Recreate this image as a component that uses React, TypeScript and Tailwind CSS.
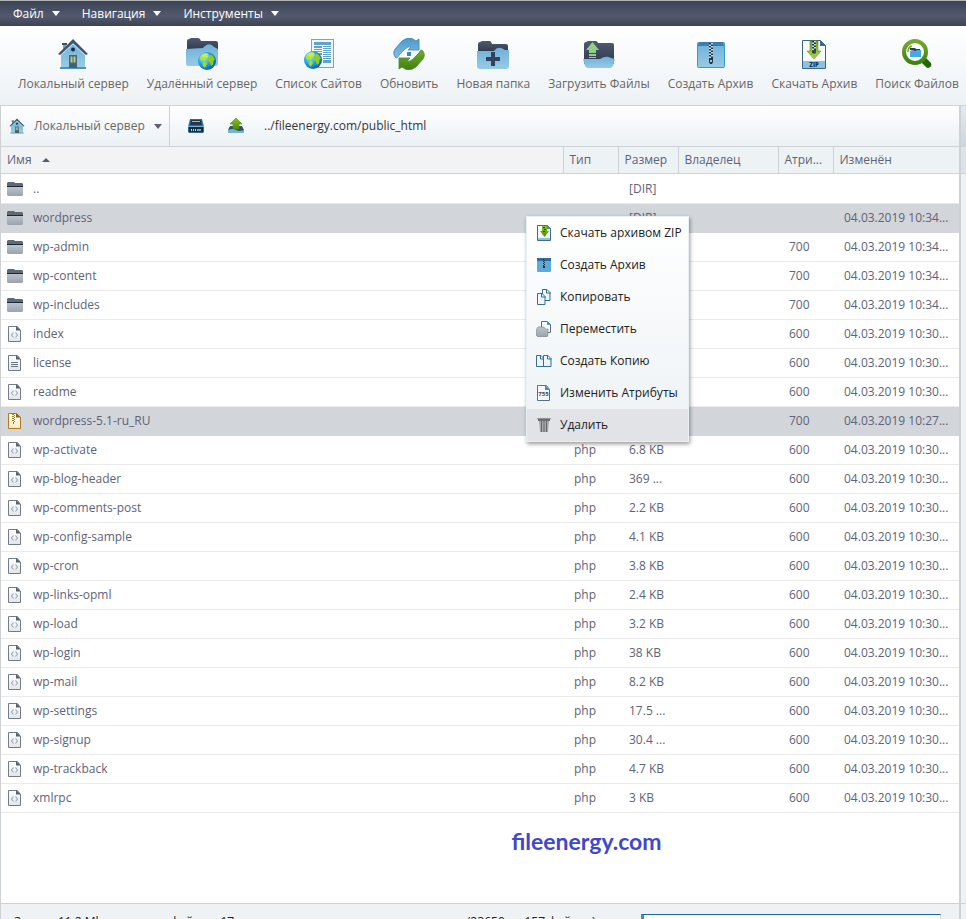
import type { ReactNode } from "react";

function Defs() {
  return (
    <svg width="0" height="0" className="absolute" aria-hidden="true">
      <defs>
        <linearGradient id="sky" x1="0" y1="0" x2="0" y2="1">
          <stop offset="0" stopColor="#6fb0d8" />
          <stop offset="1" stopColor="#97cbe5" />
        </linearGradient>
        <linearGradient id="navy" x1="0" y1="0" x2="0" y2="1">
          <stop offset="0" stopColor="#4f5970" />
          <stop offset="1" stopColor="#2f3a50" />
        </linearGradient>
        <linearGradient id="leaf" x1="0" y1="0" x2="0" y2="1">
          <stop offset="0" stopColor="#8dc21f" />
          <stop offset="1" stopColor="#4d8a10" />
        </linearGradient>
        <linearGradient id="lime" x1="0" y1="0" x2="0" y2="1">
          <stop offset="0" stopColor="#6fa818" />
          <stop offset="1" stopColor="#a9d45a" />
        </linearGradient>
        <linearGradient id="steel" x1="0" y1="0" x2="0" y2="1">
          <stop offset="0" stopColor="#bcc4ca" />
          <stop offset="1" stopColor="#9aa3ae" />
        </linearGradient>
        <linearGradient id="sheet" x1="0" y1="0" x2="0" y2="1">
          <stop offset="0" stopColor="#ffffff" />
          <stop offset="1" stopColor="#e3e5e8" />
        </linearGradient>
        <linearGradient id="gold" x1="0" y1="0" x2="0" y2="1">
          <stop offset="0" stopColor="#ffffff" />
          <stop offset="1" stopColor="#fbe9c0" />
        </linearGradient>
        <linearGradient id="green" x1="0" y1="0" x2="0" y2="1">
          <stop offset="0" stopColor="#74ab2c" />
          <stop offset="1" stopColor="#3f8010" />
        </linearGradient>
        <linearGradient id="blueArrow" x1="0" y1="0" x2="0" y2="1">
          <stop offset="0" stopColor="#4a97ca" />
          <stop offset="1" stopColor="#85c0e4" />
        </linearGradient>
        <radialGradient id="ocean" cx="0.35" cy="0.35" r="0.75">
          <stop offset="0" stopColor="#8ee8ff" />
          <stop offset="0.5" stopColor="#1fa3ee" />
          <stop offset="1" stopColor="#0b4f9e" />
        </radialGradient>
      </defs>
    </svg>
  );
}

function Svg({ size, children }: { size: 16 | 32; children: ReactNode }) {
  return (
    <svg width={size} height={size} viewBox={`0 0 ${size} ${size}`} className="shrink-0" aria-hidden="true">
      {children}
    </svg>
  );
}

function Globe({ x, y }: { x: number; y: number }) {
  return (
    <g transform={`translate(${x} ${y})`}>
      <circle cx="9" cy="9" r="9" fill="url(#ocean)" />
      <path d="M1.500 6Q4 1.500 8 1l2.500 1-1 1.500 1 1.500-2.500 1.500-1 2L5 8 3.500 9z" fill="#b6e61e" />
      <path d="M5 9.500l3 .5 1 2-2 3.500-1.500-.5-1-3z" fill="#a4dc1c" />
      <path d="M10 6l2-3.500 2.500 1 2.500 4-1.500 1-.5 4-2 1.500-1-3.500-2-1.500z" fill="#8fcf1a" />
      <ellipse cx="7" cy="3.500" rx="4" ry="2" fill="#fff" opacity="0.25" />
    </g>
  );
}

function HouseShape() {
  return (
    <>
      <path d="M6 6h3v7H6z" fill="#6fa5c5" />
      <path d="M5 5h5v2H5z" fill="#3f4d63" />
      <path d="M4 15L16 4l12 11v14H4z" fill="url(#sky)" />
      <path d="M3 29h26v2H3z" fill="#4f93bd" />
      <path d="M1 16L16 1l15 15-2 1L16 5 3 17z" fill="#44536c" />
      <path d="M4 17L16 6l12 11" fill="none" stroke="#bfe2f2" />
      <circle cx="16" cy="11.500" r="2" fill="#1c2a3a" />
      <path d="M12 17h8v13h-8z" fill="#53606e" />
      <path d="M13.500 18.500h2v6h-2zM16.500 18.500h2v6h-2z" fill="#a8d08a" />
      <path d="M14 26h4v3h-4z" fill="#2f6583" />
    </>
  );
}

function ZipTeeth({ x, y, n }: { x: number; y: number; n: number }) {
  return (
    <g>
      <rect x={x} y={y} width="4" height={n * 1.5} fill="#c5dbe6" />
      {Array.from({ length: n }, (_, i) => (
        <rect key={i} x={x + (i % 2) * 2} y={y + i * 1.5} width="2" height="1.5" fill="#24344a" />
      ))}
    </g>
  );
}

const toolIcons: Record<string, ReactNode> = {
  local: <HouseShape />,
  remote: (
    <>
      <path d="M1 12V3q0-2 2-2l2-1h7q2 0 3 3h15q2 0 2 2v7z" fill="url(#navy)" />
      <path d="M0 11l17-1q6-7 11-1l4 2v15q0 2-2 2H2q-2 0-2-2z" fill="url(#sky)" />
      <Globe x={12} y={14} />
    </>
  ),
  sites: (
    <>
      <rect x="8.500" y="1.500" width="22" height="28" fill="#eef6fa" stroke="#70a9c9" />
      <path d="M11 4h17v3H11zM11 8h8v2h-8zM20 8h8v1h-8zM11 11h8v1h-8zM20 10h8v1h-8zM11 13h8v1h-8zM20 12h8v1h-8zM20 14h8v1h-8zM20 16h8v1h-8zM20 18h8v1h-8zM20 20h8v1h-8zM20 22h8v3h-8zM11 15h8v2h-8z" fill="#5da3cb" />
      <Globe x={1} y={13} />
    </>
  ),
  refresh: (
    <>
      <path d="M3 20Q-1 16 2 11L9 3q4-3 8-3 4 1 6 3l3-2v11H15l3-3q-3-1-6 2l-6 6q-1 3-3 3z" fill="url(#blueArrow)" stroke="#3c85b8" strokeWidth="0.800" />
      <path d="M29 12q4 4 1 9l-7 8q-4 3-8 3-4-1-6-3l-3 2V20h11l-3 3q3 1 6-2l6-6q1-3 3-3z" fill="url(#green)" stroke="#4b8a29" strokeWidth="0.800" />
      <path d="M14 14h4v4h-4z" fill="#328cc3" />
    </>
  ),
  folder: (
    <>
      <path d="M1 14V6q0-2 2-2l2-1h8q1 0 2 3h14q2 0 2 2v6z" fill="url(#navy)" />
      <path d="M0 13h17q4-6 11-1h4v16q0 3-3 3H3q-3 0-3-3z" fill="url(#sky)" />
      <path d="M14 14h4v5h5v4h-5v5h-4v-5H9v-4h5z" fill="#33435b" />
    </>
  ),
  upload: (
    <>
      <path d="M1 26V6q0-2 2-2l2-1h8q1 0 2 2h14q2 0 2 2v19z" fill="url(#navy)" />
      <path d="M0 21h17q6-4 11-1l4 1-2 7q-1 2-3 2H5q-2 0-3-2z" fill="url(#sky)" />
      <path d="M9.500 4L16 12h-3v3H6v-3H3z" fill="#94cd86" />
      <path d="M6 16h7v2H6zM6 19h7v1H6z" fill="#94cd86" />
    </>
  ),
  archive: (
    <>
      <rect x="2.500" y="4.500" width="27" height="25" rx="1" fill="url(#sky)" stroke="#379ac9" />
      <path d="M4 4h24l1 4H3z" fill="#3c7daf" />
      <ZipTeeth x={14} y={5} n={10} />
      <path d="M14 20h4v4l-1 2h-2l-1-2z" fill="#24344a" />
      <path d="M15 22h2v2h-2z" fill="#aac2cf" />
    </>
  ),
  download: (
    <>
      <path d="M4.500 2.500h18l5 5v23h-23z" fill="#f7fafc" stroke="#3b6488" />
      <path d="M22 2v6h6z" fill="#346d9a" />
      <path d="M5 23h22v7H5z" fill="#8dc1df" />
      <path d="M12 3h8v10h3l-7 8-7-8h3z" fill="url(#lime)" stroke="#5f8f1c" strokeWidth="0.600" />
      <ZipTeeth x={14} y={3} n={6} />
      <path d="M14 12h4v3l-2 1-2-1z" fill="#3b4d33" />
      <text x="16" y="29" textAnchor="middle" fontSize="6" fontWeight="800" fill="#183450" fontFamily="Open Sans, sans-serif">ZIP</text>
    </>
  ),
  search: (
    <>
      <path d="M22 22l3-2 5 5q1 3-1 4-2 2-4 0l-5-5z" fill="#236605" />
      <circle cx="14" cy="14" r="11" fill="#fbfdfb" stroke="url(#green)" strokeWidth="4" />
      <path d="M9 12v-2h5l1 1h4v3z" fill="#273b56" />
      <path d="M9 13h5l2-1h4v7H9z" fill="#47a8e8" />
      <path d="M7 14q0-5 4-6" fill="none" stroke="#69a828" strokeWidth="1.500" />
    </>
  ),
};

const fileIcons: Record<string, ReactNode> = {
  folder: (
    <>
      <path d="M0 5V2l1-1h6l1 1h7l1 1v2z" fill="#5f6a72" />
      <path d="M0 5h16v1H0z" fill="#16283c" />
      <path d="M0 6h16v8l-1 1H1l-1-1z" fill="url(#steel)" />
    </>
  ),
  code: (
    <>
      <path d="M1.500.5h9l3 4v11h-12z" fill="url(#sheet)" stroke="#727c88" />
      <path d="M9 0l5 4.500H9z" fill="#59636e" />
      <path d="M6.500 6.500L4.500 9l2 2.500M8.500 6.500l2 2.500-2 2.500" fill="none" stroke="#a0acb8" strokeWidth="1.200" />
    </>
  ),
  text: (
    <>
      <path d="M1.500.5h9l3 4v11h-12z" fill="url(#sheet)" stroke="#727c88" />
      <path d="M9 0l5 4.500H9z" fill="#59636e" />
      <path d="M4 7.500h7M4 9.500h7M4 11.500h7" stroke="#697580" />
    </>
  ),
  zip: (
    <>
      <path d="M1.500.5h8l4 4v11h-12z" fill="url(#gold)" stroke="#b07c1e" />
      <path d="M9 0l5 4.500H9z" fill="#96600a" />
      <path d="M5 1h2v1H5zM7 2h1v1H7zM5 3h2v1H5zM7 4h1v1H7zM5 5h2v1H5zM7 6h1v1H7zM5 7h2v1H5zM7 8h1v1H7zM6 9h1v2H6z" fill="#a87514" />
    </>
  ),
};

function SmallPage({ x, y }: { x: number; y: number }) {
  return (
    <g transform={`translate(${x} ${y})`}>
      <path d="M.5.500h4.500l3 3v8h-7.500z" fill="#eef6fb" stroke="#31718f" />
      <path d="M4.500 0v4h4" fill="none" stroke="#31718f" />
    </g>
  );
}

const menuIcons: Record<string, ReactNode> = {
  zip: (
    <>
      <path d="M1.500.5h10l3 3v12h-13z" fill="#f4f8fb" stroke="#416d8c" />
      <path d="M11 0l4 4h-4z" fill="#4a88b1" />
      <path d="M2 13h12v2H2z" fill="#8fc0de" />
      <path d="M6 1h5v5h2l-4.500 6L4 6h2z" fill="url(#leaf)" />
      <path d="M7 2h2v1H7zM8 4h2v1H8zM7 6h2v1H7z" fill="#29401d" />
    </>
  ),
  archive: (
    <>
      <rect x="1" y="1" width="14" height="14" rx="1" fill="#62aad6" />
      <path d="M1 1h14v3H1z" fill="#2d6e9e" />
      <path d="M7 2h1v1H7zM8 3h1v1H8zM7 4h1v1H7zM8 5h1v1H8zM7 6h1v1H7zM8 7h1v1H8zM7 8h1v1H7zM7 9h2v2H7z" fill="#1c3045" />
    </>
  ),
  copy: (
    <>
      <SmallPage x={6} y={0} />
      <SmallPage x={1} y={4} />
    </>
  ),
  move: (
    <>
      <path d="M5.500.5h6l3 3v8h-9z" fill="#f6f9fb" stroke="#5a6d84" />
      <path d="M11 0l4 4h-4z" fill="#4a9ac6" />
      <path d="M0 14V9l2-3h6l1 2h3v6l-1 2H2z" fill="url(#steel)" stroke="#7d8691" strokeWidth="0.600" />
    </>
  ),
  duplicate: (
    <>
      <SmallPage x={0} y={2} />
      <SmallPage x={7} y={2} />
    </>
  ),
  attrs: (
    <>
      <path d="M1.500.5h9l3 4v11h-12z" fill="#f4f8fb" stroke="#53708c" />
      <path d="M9 0l5 5H9z" fill="#3e93c4" />
      <text x="7.500" y="11" textAnchor="middle" fontSize="6" fontWeight="700" fill="#34465c" fontFamily="Open Sans, sans-serif">755</text>
    </>
  ),
  trash: (
    <>
      <path d="M2 1h12v3H2z" fill="#6c6e72" />
      <path d="M3 4h10l-1 11H4z" fill="#a5a7ab" />
      <path d="M5.500 4v11M8 4v11M10.500 4v11" stroke="#66686c" />
      <path d="M1 1.500h14" stroke="#8f9195" />
    </>
  ),
};

const tools = [
  ["local", "Локальный сервер"],
  ["remote", "Удалённый сервер"],
  ["sites", "Список Сайтов"],
  ["refresh", "Обновить"],
  ["folder", "Новая папка"],
  ["upload", "Загрузить Файлы"],
  ["archive", "Создать Архив"],
  ["download", "Скачать Архив"],
  ["search", "Поиск Файлов"],
];

const menuItems = [
  ["zip", "Скачать архивом ZIP"],
  ["archive", "Создать Архив"],
  ["copy", "Копировать"],
  ["move", "Переместить"],
  ["duplicate", "Создать Копию"],
  ["attrs", "Изменить Атрибуты"],
  ["trash", "Удалить"],
];

type Row = { icon: string; name: string; type?: string; size?: string; attr?: string; date?: string; selected?: boolean };

const D34 = "04.03.2019 10:34...";
const D30 = "04.03.2019 10:30...";
const php = (name: string, size: string): Row => ({ icon: "code", name, type: "php", size, attr: "600", date: D30 });

const rows: Row[] = [
  { icon: "folder", name: "..", size: "[DIR]" },
  { icon: "folder", name: "wordpress", size: "[DIR]", date: D34, selected: true },
  { icon: "folder", name: "wp-admin", attr: "700", date: D34 },
  { icon: "folder", name: "wp-content", attr: "700", date: D34 },
  { icon: "folder", name: "wp-includes", attr: "700", date: D34 },
  { icon: "code", name: "index", attr: "600", date: D30 },
  { icon: "text", name: "license", attr: "600", date: D30 },
  { icon: "code", name: "readme", attr: "600", date: D30 },
  { icon: "zip", name: "wordpress-5.1-ru_RU", attr: "700", date: "04.03.2019 10:27...", selected: true },
  php("wp-activate", "6.8 KB"),
  php("wp-blog-header", "369 ..."),
  php("wp-comments-post", "2.2 KB"),
  php("wp-config-sample", "4.1 KB"),
  php("wp-cron", "3.8 KB"),
  php("wp-links-opml", "2.4 KB"),
  php("wp-load", "3.2 KB"),
  php("wp-login", "38 KB"),
  php("wp-mail", "8.2 KB"),
  php("wp-settings", "17.5 ..."),
  php("wp-signup", "30.4 ..."),
  php("wp-trackback", "4.7 KB"),
  php("xmlrpc", "3 KB"),
];

const headers = ["Тип", "Размер", "Владелец", "Атри...", "Изменён"];

function Caret({ color }: { color: string }) {
  return (
    <svg width="8" height="5" viewBox="0 0 8 5" className="shrink-0" aria-hidden="true">
      <path d="M0 0h8L4 5z" fill={color} />
    </svg>
  );
}

export default function App() {
  return (
    <div className="relative flex h-screen flex-col overflow-hidden bg-[#eef2f5] font-['Open_Sans','Noto_Sans',sans-serif] text-[12px] leading-5 text-[#5e6378]">
      <Defs />
      <nav className="flex h-[26px] shrink-0 items-center gap-[22px] border-t border-[#b4b5b7] bg-linear-to-b from-[#3b4253] via-[#535a6e] via-60% to-[#3c4354] px-[13px] font-medium text-white">
        {["Файл", "Навигация", "Инструменты"].map((label) => (
          <button key={label} className="flex items-center gap-2">
            {label}
            <Caret color="#fff" />
          </button>
        ))}
      </nav>

      <div className="flex h-[79px] shrink-0 items-start overflow-hidden bg-linear-to-b from-white to-[#edf2f5] px-[9px] pt-3 text-[#666]">
        {tools.map(([icon, label]) => (
          <button key={icon} className="flex shrink-0 flex-col items-center gap-1 px-[9px] whitespace-nowrap">
            <Svg size={32}>{toolIcons[icon]}</Svg>
            {label}
          </button>
        ))}
      </div>

      <div className="flex min-h-0 flex-1">
        <main className="flex min-w-0 flex-1 flex-col border-t border-l border-[#cfd2d4] bg-white">
          <div className="flex h-10 shrink-0 items-center bg-linear-to-b from-white to-[#ebf1f4]">
            <button className="flex h-full w-[169px] items-center gap-[9px] border-r border-[#cfd2d4] pl-2 whitespace-nowrap text-[#666]">
              <svg width="16" height="16" viewBox="0 0 32 32" className="shrink-0" aria-hidden="true">
                <HouseShape />
              </svg>
              Локальный сервер
              <Caret color="#5a6170" />
            </button>
            <button aria-label="Диск" className="ml-[18px]">
              <Svg size={16}>
                <path d="M2 1h12l2 8v5l-1 1H1l-1-1V9z" fill="#2f6c96" />
                <path d="M3 2h10l1 5H2z" fill="#24374b" />
                <path d="M4 3h8v1H4z" fill="#8dbbd6" />
                <path d="M1 9h14v5H1z" fill="#1d2c3c" />
                <path d="M0 8h16v1H0z" fill="#6eb3dc" />
                <path d="M3 11h1v2H3zM5 11h1v2H5zM7 11h1v2H7z" fill="#ded76b" />
                <path d="M9 11h4v2H9z" fill="#7e9fb3" />
              </Svg>
            </button>
            <button aria-label="Вверх" className="ml-6">
              <Svg size={16}>
                <path d="M2 8h12l2 4v3H0v-3z" fill="#35516a" />
                <path d="M0 12q5-2 8 0t8 0v3H0z" fill="#71b5dc" />
                <path d="M8 0l6 6h-3v5H5V6H2z" fill="url(#leaf)" stroke="#4c8415" strokeWidth="0.600" />
              </Svg>
            </button>
            <input
              aria-label="Путь"
              defaultValue="../fileenergy.com/public_html"
              className="ml-5 min-w-0 flex-1 bg-transparent text-[#33363d] outline-none"
            />
          </div>

          <table className="w-full table-fixed border-collapse text-left whitespace-nowrap">
            <colgroup>
              <col />
              <col className="w-[55px]" />
              <col className="w-[60px]" />
              <col className="w-[100px]" />
              <col className="w-[55px]" />
              <col className="w-[126px]" />
            </colgroup>
            <thead>
              <tr className="h-[27px] border-y border-[#cfd2d4] bg-[#edf2f5]">
                <th className="bg-[#f2f3f5] p-0 pl-[6px] font-normal">
                  <button className="flex items-center gap-[10px]">
                    Имя
                    <svg width="8" height="4" viewBox="0 0 8 4" aria-hidden="true">
                      <path d="M0 4h8L4 0z" fill="#555c6b" />
                    </svg>
                  </button>
                </th>
                {headers.map((h) => (
                  <th key={h} className="border-l border-[#cfd2d4] p-0 pl-[6px] font-normal">
                    <button>{h}</button>
                  </th>
                ))}
              </tr>
            </thead>
            <tbody>
              {rows.map((r) => (
                <tr
                  key={r.name}
                  className={
                    r.selected
                      ? "h-[29px] border-b border-[#d2d5d9] bg-[#d2d5d9]"
                      : "h-[29px] border-b border-[#ebebeb] first:h-[30px]"
                  }
                >
                  <td className="p-0 pl-[6px]">
                    <div className="flex items-center gap-[10px]">
                      <Svg size={16}>{fileIcons[r.icon]}</Svg>
                      {r.name}
                    </div>
                  </td>
                  <td className="p-0 pl-[11px]">{r.type}</td>
                  <td className="p-0 pl-[11px]">{r.size}</td>
                  <td className="p-0" />
                  <td className="p-0 pl-[11px]">{r.attr}</td>
                  <td className="p-0 pl-[11px]">{r.date}</td>
                </tr>
              ))}
            </tbody>
          </table>

          <div className="flex min-h-0 flex-1 justify-center pt-3 pl-[213px]">
            <a href="#fileenergy" className="h-8 font-['Lato',sans-serif] text-[23px] leading-8 font-bold text-[#3f48cc]">
              fileenergy.com
            </a>
          </div>

          <footer className="flex h-4 shrink-0 items-start overflow-hidden border-t border-[#cfd2d4] bg-[#eef2f5] pt-[10px] pr-[18px] pl-[13px] text-[#222]">
            <span className="w-[453px] shrink-0 leading-4">Занято 11.2 Mb, выделено файлов: 17</span>
            <span className="flex-1 leading-4">(33650 из 157 файлов)</span>
            <div role="progressbar" aria-label="Место на диске" aria-valuenow={1} className="h-4 w-[300px] border-t border-r border-l-3 border-t-[#1a69a5] border-r-[#cfd2d4] border-l-[#2a93d5] bg-white" />
          </footer>
        </main>

        <div className="w-[2px] shrink-0 bg-[#cfd2d4]" />
        <aside className="flex w-[5px] shrink-0 flex-col border-t border-[#cfd2d4]">
          <div className="h-10 bg-linear-to-b from-[#e3eaf0] to-[#c9d6e1]" />
          <div className="h-7 border-y border-[#cfd2d4] bg-[#dbe4ec]" />
          <div className="flex-1" />
          <div className="h-4 border-t border-[#cfd2d4]" />
        </aside>
      </div>

      <div role="menu" className="absolute top-[216px] left-[526px] w-[163px] border border-[#e9f1f4] bg-linear-to-b from-white to-[#edf2f5] text-[#222] shadow-[1px_2px_4px_rgba(0,0,0,0.4)]">
        {menuItems.map(([icon, label]) => (
          <button
            key={icon}
            role="menuitem"
            className={
              icon === "trash"
                ? "flex h-8 w-full items-center gap-2 bg-[#e2e3e7] pl-[9px] whitespace-nowrap"
                : "flex h-8 w-full items-center gap-2 pl-[9px] whitespace-nowrap"
            }
          >
            <Svg size={16}>{menuIcons[icon]}</Svg>
            {label}
          </button>
        ))}
      </div>
    </div>
  );
}
